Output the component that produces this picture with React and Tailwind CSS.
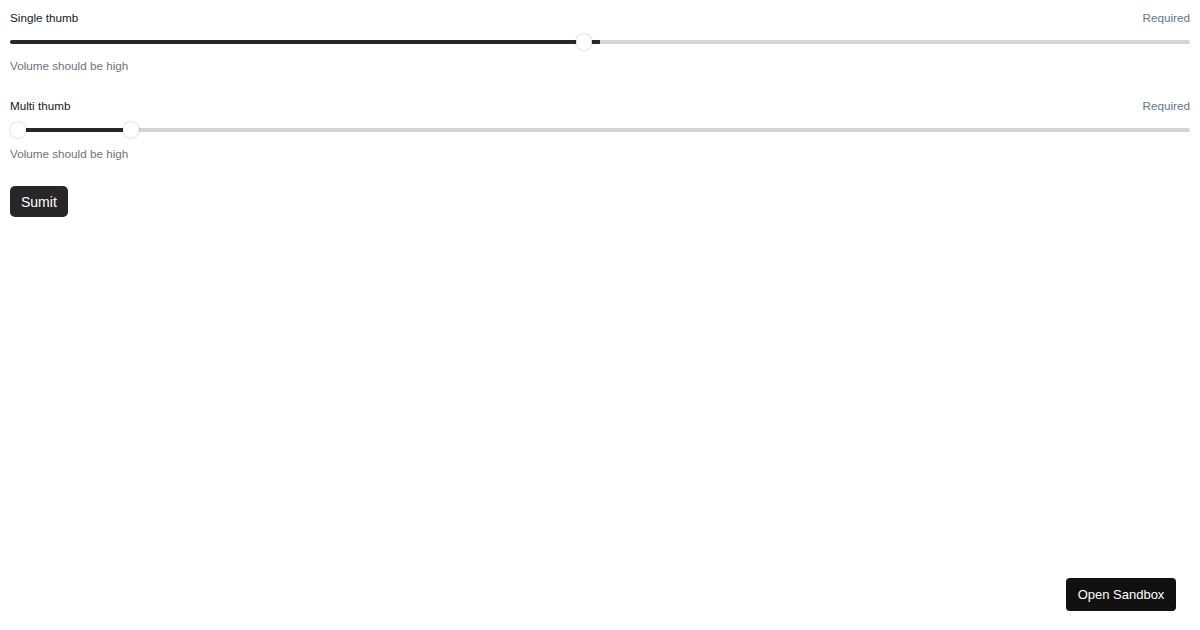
export default function App() {
  return (
    <div className="min-h-[630px] bg-white p-[10px] font-['Liberation_Sans',Arial,sans-serif]">
      <div className="flex flex-col">
        <div className="flex h-4 items-center justify-between text-[11.7px] leading-4">
          <span className="text-[#18181b]">Single thumb</span>
          <span className="text-[#64748b]">Required</span>
        </div>
        <div className="relative mt-2 flex h-4 items-center">
          <div className="relative h-1 w-full rounded-full bg-[#d4d4d8]">
            <div className="absolute left-0 top-0 h-1 w-1/2 rounded-l-full bg-[#27272a]" />
          </div>
          <div className="absolute left-[calc(50%-24px)] top-0 h-4 w-4 rounded-full bg-white shadow-[0_0_2px_rgba(0,0,0,0.3)]" />
        </div>
        <div className="mt-2 h-4 text-[11.7px] leading-4 text-[#71717a]">Volume should be high</div>
      </div>

      <div className="mt-6 flex flex-col">
        <div className="flex h-4 items-center justify-between text-[11.7px] leading-4">
          <span className="text-[#18181b]">Multi thumb</span>
          <span className="text-[#64748b]">Required</span>
        </div>
        <div className="relative mt-2 flex h-4 items-center">
          <div className="relative h-1 w-full rounded-full bg-[#d4d4d8]">
            <div className="absolute left-[16px] top-0 h-1 w-[97px] bg-[#27272a]" />
          </div>
          <div className="absolute left-0 top-0 h-4 w-4 rounded-full bg-white shadow-[0_0_2px_rgba(0,0,0,0.3)]" />
          <div className="absolute left-[113px] top-0 h-4 w-4 rounded-full bg-white shadow-[0_0_2px_rgba(0,0,0,0.3)]" />
        </div>
        <div className="mt-2 h-4 text-[11.7px] leading-4 text-[#71717a]">Volume should be high</div>
      </div>

      <button className="mt-6 h-[31px] rounded-[5px] bg-[#27272a] px-[11px] pt-[1px] text-[14px] text-white">
        Sumit
      </button>

      <button className="fixed bottom-[19px] right-[24px] h-[33px] w-[110px] rounded-[4px] bg-[#111111] text-[13px] text-white">
        Open Sandbox
      </button>
    </div>
  );
}
